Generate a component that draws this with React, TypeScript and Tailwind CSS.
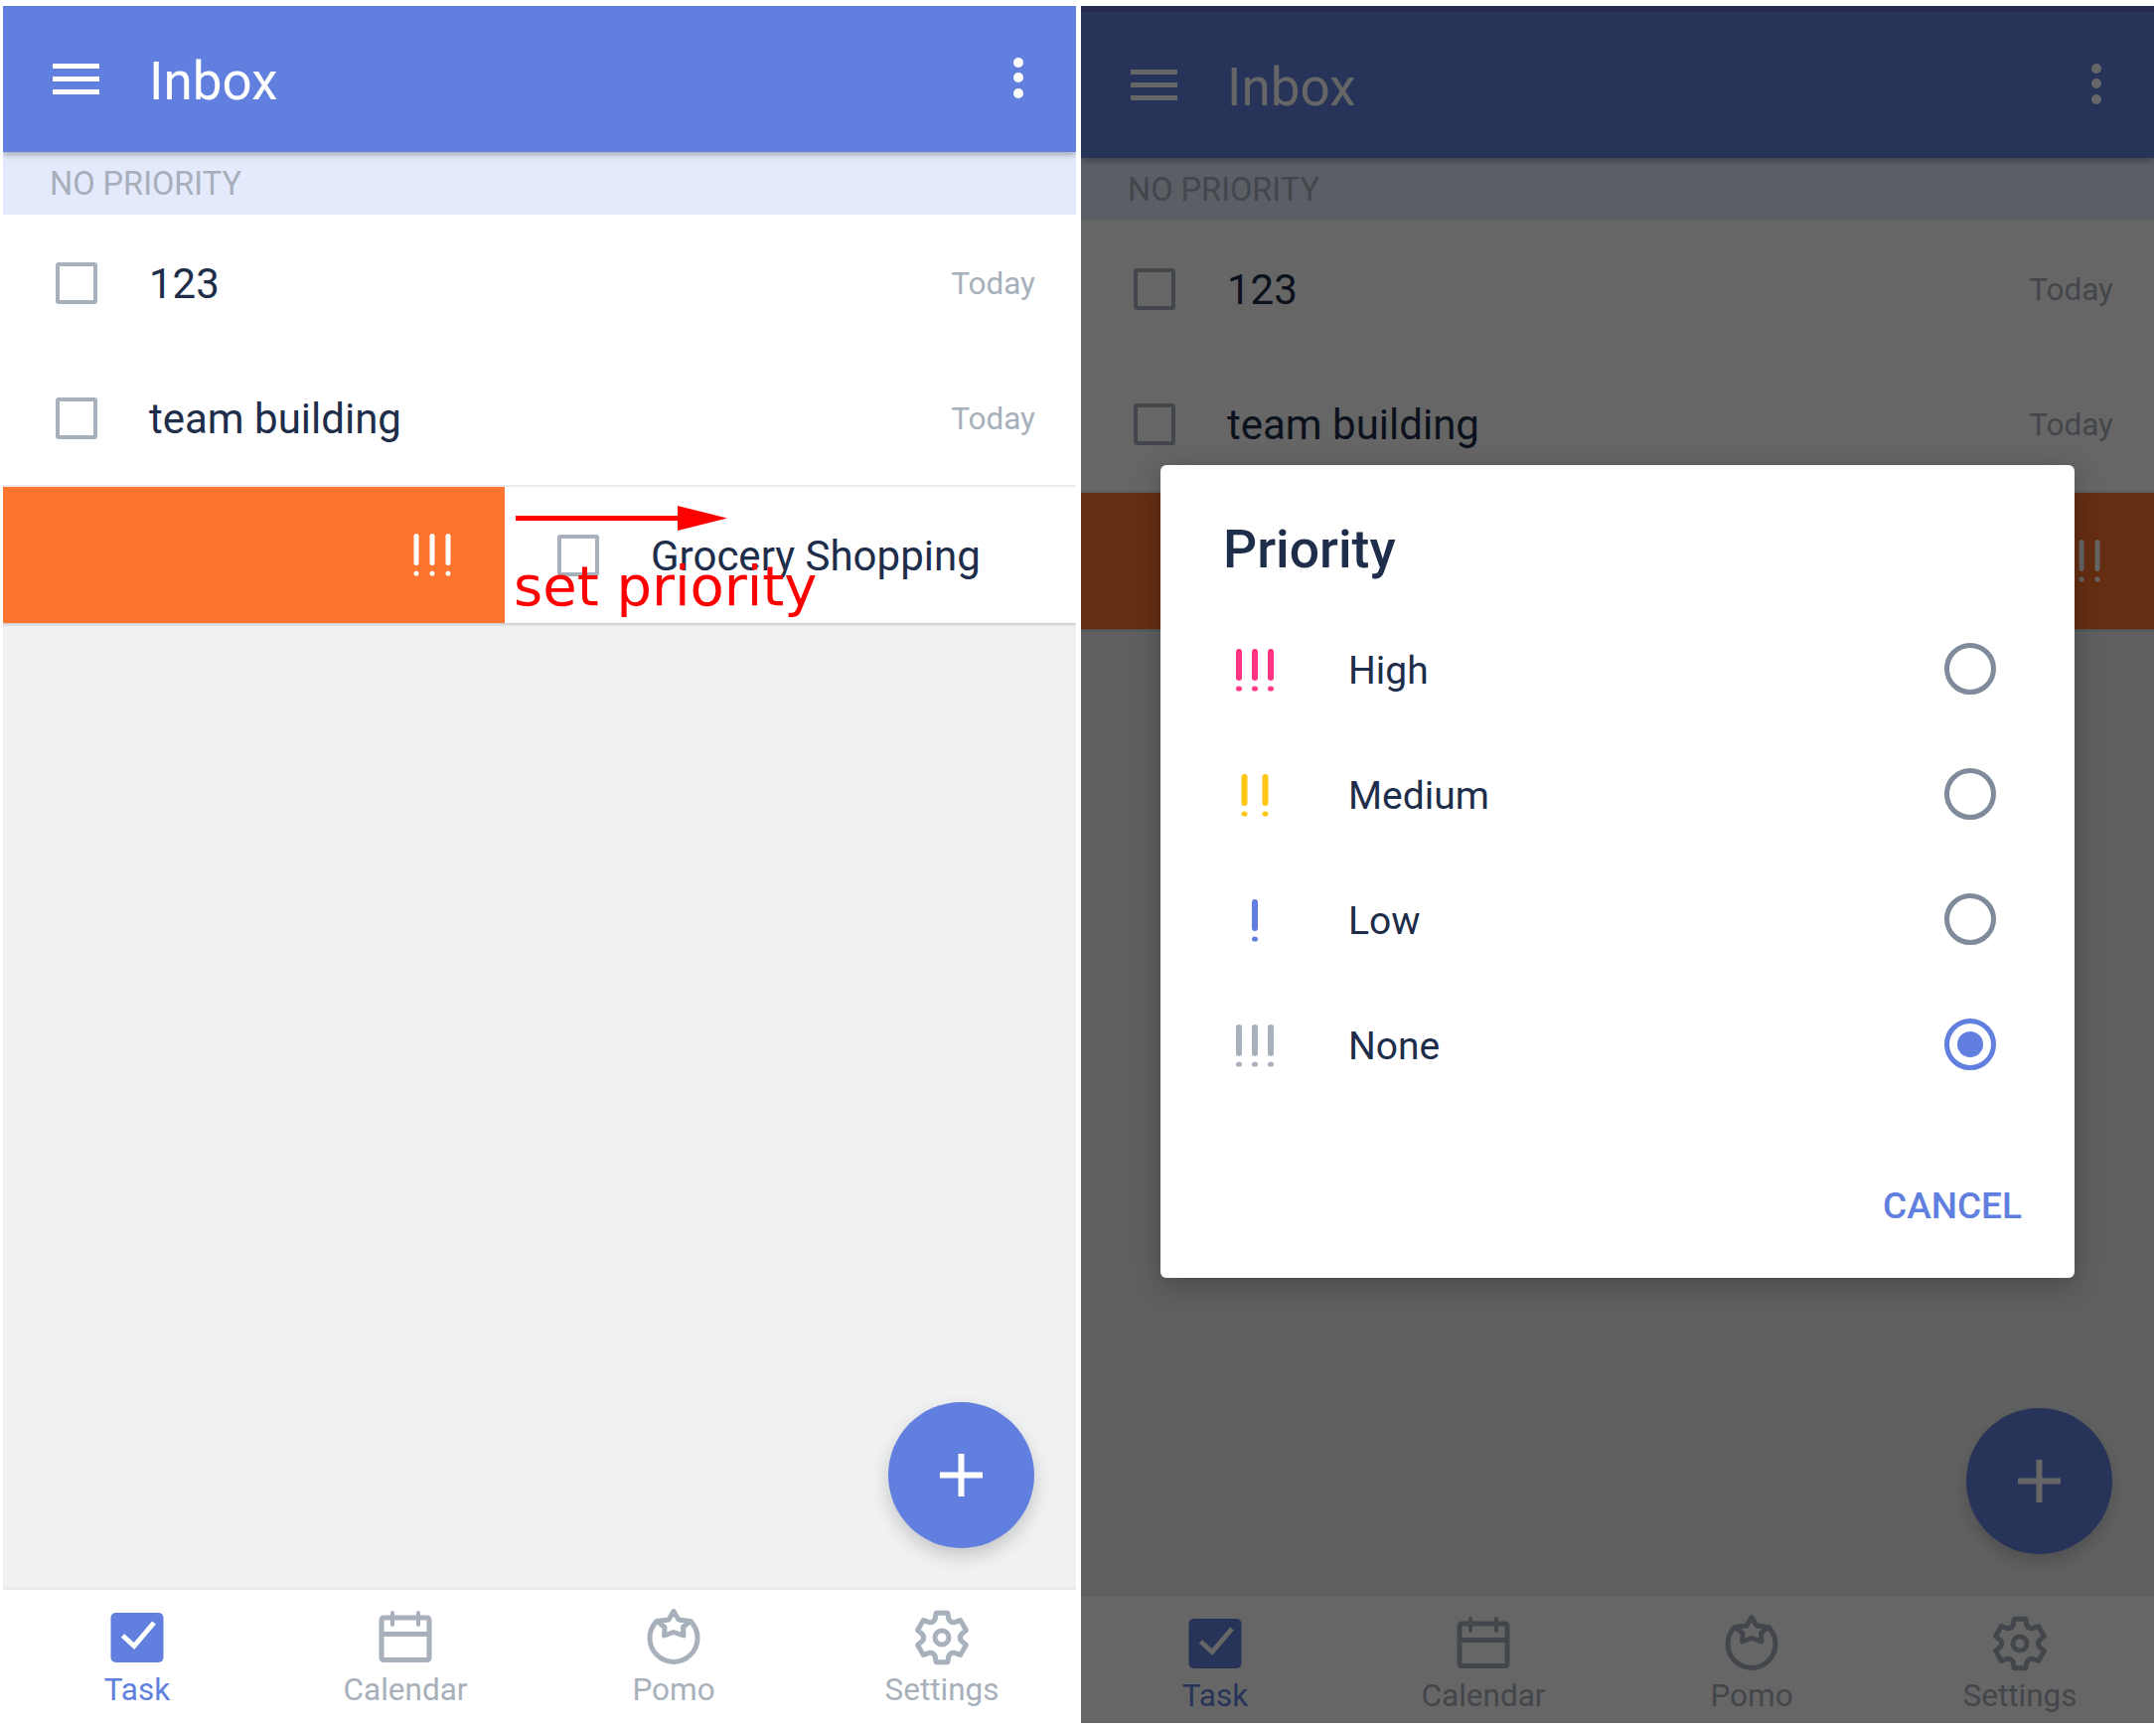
import React from "react";

const gearPath = (() => {
  const c = 30;
  const pt = (r: number, deg: number) => {
    const a = (deg * Math.PI) / 180;
    return `${(c + r * Math.cos(a)).toFixed(2)} ${(c + r * Math.sin(a)).toFixed(2)}`;
  };
  let d = "";
  for (let k = 0; k < 6; k++) {
    const t = -90 + 60 * k;
    d += `${k === 0 ? "M" : "L"}${pt(25.5, t - 13)} L${pt(25.5, t + 13)} L${pt(20, t + 20)} Q${pt(17, t + 30)} ${pt(20, t + 40)} `;
  }
  return d + "Z";
})();

function Bang({ count, color, spacing = 16, barW = 6 }: { count: number; color: string; spacing?: number; barW?: number }) {
  const w = 44;
  const start = w / 2 - ((count - 1) * spacing) / 2;
  return (
    <svg width={w} height={43} viewBox={`0 0 ${w} 43`} className="block">
      {Array.from({ length: count }).map((_, i) => {
        const x = start + i * spacing;
        return (
          <g key={i} fill={color}>
            <rect x={x - barW / 2} y={0} width={barW} height={32} rx={barW / 2} />
            <ellipse cx={x} cy={40} rx={barW / 2} ry={2.6} />
          </g>
        );
      })}
    </svg>
  );
}

function Checkbox() {
  return <div className="h-[42px] w-[42px] shrink-0 rounded-[3px] border-[4px] border-[#a7b0bb] bg-white" />;
}

function TaskRow({ title, divider }: { title: string; divider?: boolean }) {
  return (
    <div className={`flex h-[137px] items-center bg-white pl-[53px] pr-[41px] ${divider ? "border-b-2 border-[#e9ebee]" : ""}`}>
      <Checkbox />
      <div className="ml-[52px] flex-1 pt-[2px] text-[42px] text-[#1d2d4a]">{title}</div>
      <div className="pt-[3px] text-[31.5px] text-[#a7b0bb]">Today</div>
    </div>
  );
}

function TaskIcon() {
  return (
    <svg width="60" height="60" viewBox="0 0 60 60" className="block">
      <rect x="3.5" y="7" width="53" height="50" rx="5" fill="#617fde" />
      <path d="M15.5 30 L27 40.5 L47 17" fill="none" stroke="#fff" strokeWidth="5" />
    </svg>
  );
}

function CalendarIcon() {
  return (
    <svg width="60" height="60" viewBox="0 0 60 60" className="block" fill="none" stroke="#a7b0bb" strokeWidth="5">
      <rect x="6" y="12" width="48" height="42.5" rx="2" />
      <path d="M6 28.5 H54" />
      <path d="M17 7 V19 M43 7 V19" strokeLinecap="round" strokeWidth="4" />
    </svg>
  );
}

function PomoIcon() {
  return (
    <svg width="60" height="60" viewBox="0 0 60 60" className="block" fill="none" stroke="#a7b0bb" strokeWidth="5" strokeLinejoin="round">
      <path d="M12.5 16 A24 24 0 1 0 47.5 16" strokeLinecap="round" />
      <path d="M30 5.5 L35 14 L46.5 15.5 L39.5 21.5 L40 30 L30 26.5 L20.5 30 L21 21.5 L13.5 15.5 L25 14 Z" fill="#fff" />
    </svg>
  );
}

function GearIcon() {
  return (
    <svg width="60" height="60" viewBox="0 -2 60 60" className="block overflow-visible" fill="none" stroke="#a7b0bb" strokeWidth="5" strokeLinejoin="round">
      <path d={gearPath} />
      <circle cx="30" cy="30" r="7" />
    </svg>
  );
}

function NavItem({ icon, label, active }: { icon: React.ReactNode; label: string; active?: boolean }) {
  return (
    <div className="flex flex-1 flex-col items-center">
      {icon}
      <div className={`mt-[5px] text-[31.5px] leading-[40px] ${active ? "text-[#617fde]" : "text-[#a7b0bb]"}`}>{label}</div>
    </div>
  );
}

function Phone({ dimmed }: { dimmed?: boolean }) {
  return (
    <div className="relative flex h-[1728px] w-[1080px] shrink-0 flex-col overflow-hidden bg-[#f0f1f3]">
      {dimmed && <div className="h-[6px] bg-[#5d6ed0]" />}
      <header className="relative z-10 flex h-[147px] shrink-0 items-center bg-[#617fde] pl-[50px] pr-[53px] shadow-[0_3px_6px_rgba(0,0,0,0.28)]">
        <div className="flex w-[47px] flex-col gap-[8px] pb-[1px]">
          <div className="h-[5px] bg-white" />
          <div className="h-[5px] bg-white" />
          <div className="h-[5px] bg-white" />
        </div>
        <div className="ml-[50px] flex-1 pt-[6px] text-[53px] leading-none text-white">Inbox</div>
        <div className="flex flex-col gap-[5.5px] pb-[3px]">
          <div className="h-[10px] w-[10px] rounded-full bg-white" />
          <div className="h-[10px] w-[10px] rounded-full bg-white" />
          <div className="h-[10px] w-[10px] rounded-full bg-white" />
        </div>
      </header>
      <div className="flex h-[63px] shrink-0 items-center bg-[#e4eafb] pl-[47px] pt-[2px] text-[32.5px] text-[#a7afbb]">NO PRIORITY</div>
      <TaskRow title="123" />
      <TaskRow title="team building" divider />
      <div className="relative flex h-[137px] shrink-0 shadow-[0_2px_2px_rgba(0,0,0,0.15)]">
        <div className={`flex h-full items-center justify-end bg-[#ff742e] pr-[51px] ${dimmed ? "w-full" : "w-[505px]"}`}>
          <Bang count={3} color="#fff" barW={5} />
        </div>
        {!dimmed && (
          <div className="flex flex-1 items-center bg-white pl-[53px]">
            <Checkbox />
            <div className="ml-[52px] whitespace-nowrap pt-[2px] text-[42px] text-[#1d2d4a]">Grocery Shopping</div>
          </div>
        )}
      </div>
      <main className="relative flex-1">
        <div className="absolute bottom-[42px] right-[42px] flex h-[147px] w-[147px] items-center justify-center rounded-full bg-[#617fde] shadow-[0_8px_18px_rgba(0,0,0,0.18)]">
          <svg width="43" height="43" viewBox="0 0 43 43">
            <path d="M21.5 0 V43 M0 21.5 H43" stroke="#fff" strokeWidth="6" />
          </svg>
        </div>
      </main>
      <nav className={`relative flex shrink-0 bg-white pt-[16px] shadow-[0_-2px_4px_rgba(0,0,0,0.05)] ${dimmed ? "h-[128px]" : "h-[134px]"}`}>
        <NavItem icon={<TaskIcon />} label="Task" active />
        <NavItem icon={<CalendarIcon />} label="Calendar" />
        <NavItem icon={<PomoIcon />} label="Pomo" />
        <NavItem icon={<GearIcon />} label="Settings" />
      </nav>
      {dimmed && <div className="absolute inset-0 z-20 bg-black/60" />}
      {dimmed && <PriorityDialog />}
      {!dimmed && <Annotation />}
    </div>
  );
}

function PriorityRow({ label, count, color, spacing, selected }: { label: string; count: number; color: string; spacing: number; selected?: boolean }) {
  return (
    <div className="flex h-[126px] items-center pl-[73px] pr-[79px]">
      <div className="w-[44px] pt-[1px]">
        <Bang count={count} color={color} spacing={spacing} />
      </div>
      <div className="ml-[72px] flex-1 pt-[2px] text-[39px] text-[#1d2d4a]">{label}</div>
      <div className={`mb-[2px] flex h-[52px] w-[52px] items-center justify-center rounded-full border-[5px] ${selected ? "border-[#617fde]" : "border-[#7f8b9b]"}`}>
        {selected && <div className="h-[26px] w-[26px] rounded-full bg-[#617fde]" />}
      </div>
    </div>
  );
}

function PriorityDialog() {
  return (
    <div className="absolute left-[80px] top-[462px] z-30 flex h-[818px] w-[920px] flex-col rounded-[6px] bg-white shadow-[0_8px_30px_rgba(0,0,0,0.25)]">
      <div className="mt-[55px] pl-[63px] text-[53.5px] font-medium leading-[60px] text-[#1d2d4a]">Priority</div>
      <div className="mt-[28px]">
        <PriorityRow label="High" count={3} color="#ff3482" spacing={16} />
        <PriorityRow label="Medium" count={2} color="#ffc612" spacing={21} />
        <PriorityRow label="Low" count={1} color="#617fde" spacing={16} />
        <PriorityRow label="None" count={3} color="#a7b0bb" spacing={16} selected />
      </div>
      <div className="mt-[74px] pr-[53px] text-right text-[37px] font-medium leading-[50px] text-[#617fde]">CANCEL</div>
    </div>
  );
}

function Annotation() {
  return (
    <div className="pointer-events-none absolute left-[516px] top-[503px] z-20">
      <svg width="216" height="25" viewBox="0 0 216 25" className="block">
        <rect x="0" y="10" width="165" height="5" fill="#ff0000" />
        <path d="M163 0 L213 12.5 L163 25 Z" fill="#ff0000" />
      </svg>
      <div className="ml-[-2px] mt-[24px] whitespace-nowrap font-['DejaVu_Sans',sans-serif] text-[56px] leading-[64px] text-[#ff0000]">set priority</div>
    </div>
  );
}

export default function App() {
  return (
    <div className="flex h-[1740px] w-[2170px] gap-[5px] bg-white pl-[3px] pt-[6px] font-[Roboto,sans-serif]">
      <Phone />
      <Phone dimmed />
    </div>
  );
}
